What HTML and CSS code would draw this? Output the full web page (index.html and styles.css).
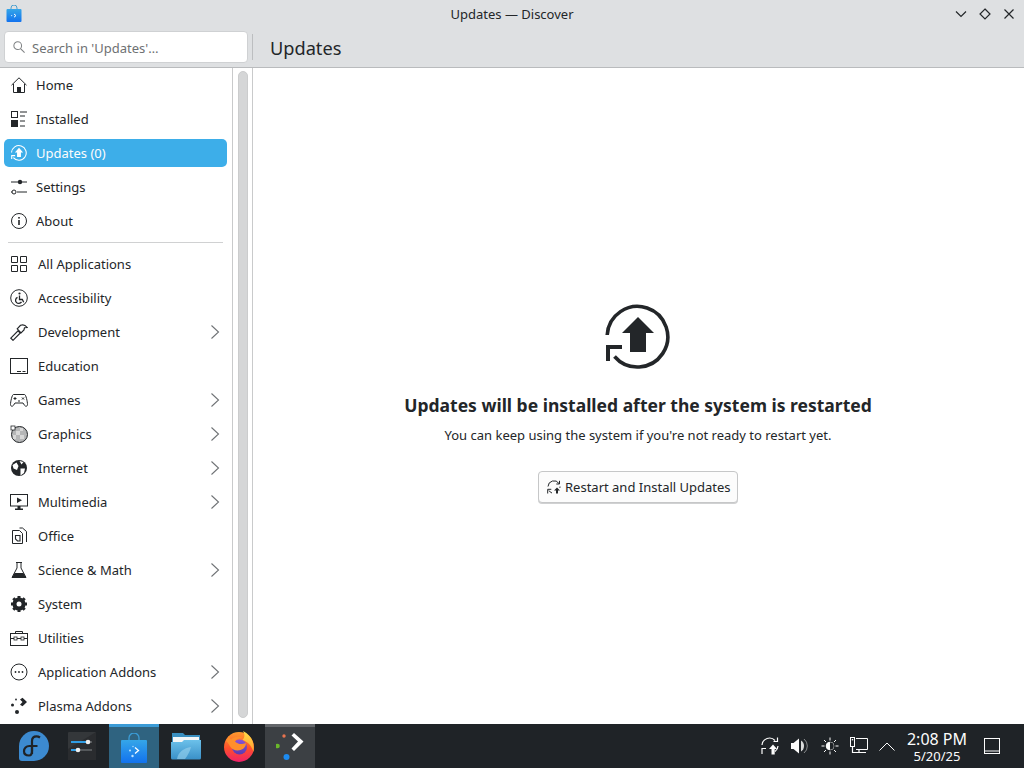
FILE: index.html
```html
<!DOCTYPE html>
<html lang="en">
<head>
<meta charset="utf-8">
<title>Updates — Discover</title>
<link rel="stylesheet" href="styles.css">
</head>
<body>
<svg class="defs" width="0" height="0" aria-hidden="true">
  <defs>
    <symbol id="chev" viewBox="0 0 12 16"><path d="M2.500 1.500 9.500 8 2.500 14.500" fill="none" stroke="#6f7275" stroke-width="1.100"/></symbol>
    <linearGradient id="bag" x1="0" y1="0" x2="0" y2="1"><stop offset="0" stop-color="#35a6e8"/><stop offset="1" stop-color="#1272ee"/></linearGradient>
    <linearGradient id="fold" x1="0" y1="0" x2="0" y2="1"><stop offset="0" stop-color="#6cc1ea"/><stop offset="1" stop-color="#3a90c8"/></linearGradient>
    <linearGradient id="ff" x1="0" y1="0" x2="0" y2="1"><stop offset="0" stop-color="#ff9a2e"/><stop offset=".55" stop-color="#ff4f2c"/><stop offset="1" stop-color="#f0206a"/></linearGradient>
    <linearGradient id="ffin" x1="0" y1="0" x2="0" y2="1"><stop offset="0" stop-color="#8a55d8"/><stop offset="1" stop-color="#5b3bb0"/></linearGradient>
    <linearGradient id="ffy" x1="0" y1="0" x2="0" y2="1"><stop offset="0" stop-color="#ffe14a"/><stop offset="1" stop-color="#ff9a2e"/></linearGradient>
  </defs>
</svg>

<div class="window">
  <header class="titlebar">
    <div class="titlebar-app">
      <svg width="16" height="18" viewBox="0 0 16 18"><path d="M5 5V3a3 3 0 0 1 6 0v2" fill="none" stroke="#4a9fd0" stroke-width="1"/><rect x="0.500" y="4" width="15" height="13" rx="1" fill="url(#bag)"/><path d="M8 9l2 1.600L8 12.200" fill="none" stroke="#fff" stroke-width="1"/><circle cx="5.600" cy="10.600" r=".7" fill="#bfe4ff"/></svg>
    </div>
    <div class="titlebar-title">Updates — Discover</div>
    <div class="titlebar-controls">
      <svg width="14" height="14" viewBox="0 0 14 14"><path d="M2 4.500 7 9.500 12 4.500" fill="none" stroke="#232629" stroke-width="1.200"/></svg>
      <svg width="14" height="14" viewBox="0 0 14 14"><path d="M7 2 12 7 7 12 2 7Z" fill="none" stroke="#232629" stroke-width="1.200"/></svg>
      <svg width="14" height="14" viewBox="0 0 14 14"><path d="M2.500 2.500 11.500 11.500M11.500 2.500 2.500 11.500" fill="none" stroke="#232629" stroke-width="1.200"/></svg>
    </div>
  </header>

  <div class="toolbar">
    <div class="search">
      <svg width="12" height="12" viewBox="0 0 14 14"><circle cx="5.500" cy="5.500" r="4.500" fill="none" stroke="#7f8284" stroke-width="1.200"/><path d="M8.800 8.800 13.500 13.500" stroke="#7f8284" stroke-width="1.300"/></svg>
      <span class="search-text">Search in 'Updates'…</span>
    </div>
    <div class="toolbar-sep"></div>
    <h1 class="page-title">Updates</h1>
  </div>

  <div class="content">
    <nav class="sidebar">
      <ul class="nav nav-top">
        <li class="nav-item">
          <svg class="ico" viewBox="0 0 16 16"><path d="M.5 8.200 8 .8l7.500 7.400" fill="none" stroke="#232629"/><path d="M2.500 7v8.500h11V7" fill="none" stroke="#232629"/><rect x="6" y="10" width="4" height="5.500" fill="#232629"/></svg>
          <span>Home</span>
        </li>
        <li class="nav-item">
          <svg class="ico" viewBox="0 0 16 16"><rect x=".5" y=".5" width="6" height="6" fill="none" stroke="#232629"/><rect x="0" y="9" width="7" height="7" fill="#232629"/><path d="M9 1h7M9 5h5M9 10h5M9 15h5" stroke="#232629" fill="none"/></svg>
          <span>Installed</span>
        </li>
        <li class="nav-item nav-active">
          <svg class="ico" viewBox="0 0 66 66"><path d="M2.200 31A30.300 30.300 0 1 1 9.500 52.500" fill="none" stroke="#fff" stroke-width="4.500"/><path d="M33 11 16 31H25V50H41V31H50Z" fill="#fff"/><path d="M3 58V44H17" fill="none" stroke="#fff" stroke-width="4.500"/></svg>
          <span>Updates (0)</span>
        </li>
        <li class="nav-item">
          <svg class="ico" viewBox="0 0 16 16"><path d="M0 3h16M6 13h10M0 13h1" stroke="#232629" fill="none"/><circle cx="9" cy="3" r="2.200" fill="#232629"/><circle cx="3" cy="13" r="2" fill="none" stroke="#232629"/></svg>
          <span>Settings</span>
        </li>
        <li class="nav-item">
          <svg class="ico" viewBox="0 0 16 16"><circle cx="8" cy="8" r="7.500" fill="none" stroke="#232629"/><rect x="7.200" y="7" width="1.600" height="5" fill="#232629"/><rect x="7.200" y="4" width="1.600" height="1.600" fill="#232629"/></svg>
          <span>About</span>
        </li>
      </ul>
      <div class="nav-sep"></div>
      <ul class="nav nav-cats">
        <li class="nav-item">
          <svg class="ico" viewBox="0 0 18 18"><path d="M1.500 1.500h6v6h-6zM10.500 1.500h6v6h-6zM1.500 10.500h6v6h-6zM10.500 10.500h6v6h-6z" fill="none" stroke="#232629"/></svg>
          <span>All Applications</span>
        </li>
        <li class="nav-item">
          <svg class="ico" viewBox="0 0 18 18"><circle cx="9" cy="9" r="8.300" fill="none" stroke="#232629"/><circle cx="9.500" cy="4.500" r="1.100" fill="#232629"/><path d="M9.500 6.500v4h2.800l1.400 2.800M7.500 8.300a3.200 3.200 0 1 0 4 4.600" fill="none" stroke="#232629" stroke-width="1.300"/></svg>
          <span>Accessibility</span>
        </li>
        <li class="nav-item has-sub">
          <svg class="ico" viewBox="0 0 18 18"><path d="M.8 15.200 8 7.800 10.300 10 3 17.300Z" fill="none" stroke="#232629" stroke-width="1.200"/><path d="M7.200 5.800 10.500 2.300c2.500-1 4.800-.3 6.700 2.200l-2.700.2-.5 2.300L11 10Z" fill="none" stroke="#232629" stroke-width="1.200"/></svg>
          <span>Development</span>
          <svg class="chev"><use href="#chev"/></svg>
        </li>
        <li class="nav-item">
          <svg class="ico" viewBox="0 0 18 18"><rect x=".5" y="1.500" width="17" height="15" fill="none" stroke="#232629"/><path d="M7 14.500h4M12.500 14.500h3" stroke="#232629"/></svg>
          <span>Education</span>
        </li>
        <li class="nav-item has-sub">
          <svg class="ico" viewBox="0 0 18 18"><path d="M3.500 3.500h11C16 3.500 17.500 11 17.500 13.500c0 2-2 2.300-3 .8L13 12H5l-1.500 2.300c-1 1.500-3 1.200-3-.8C.5 11 2 3.500 3.500 3.500Z" fill="none" stroke="#232629"/><path d="M3.500 7.500h3M5 6v3M8 10h2M12 6.500l2 2M14 6.500l-2 2" stroke="#232629" fill="none"/></svg>
          <span>Games</span>
          <svg class="chev"><use href="#chev"/></svg>
        </li>
        <li class="nav-item has-sub">
          <svg class="ico" viewBox="0 0 18 18"><circle cx="9.500" cy="9.500" r="8" fill="#b5b6b7" stroke="#232629"/><path d="M6 6h4v4H6zM10 10h4v4h-4zM3 10h3v4H3zM10 3h3v3h-3z" fill="#d8d8d8"/><rect x="1" y="1" width="4" height="4" fill="#fff" stroke="#232629" stroke-width=".8"/></svg>
          <span>Graphics</span>
          <svg class="chev"><use href="#chev"/></svg>
        </li>
        <li class="nav-item has-sub">
          <svg class="ico" viewBox="0 0 18 18"><circle cx="9" cy="9" r="8" fill="#232629"/><path d="M2.500 6 6.500 3.500 8.500 7 7 11 3.500 9.500ZM10.500 9.500h4.500l-1 4.500-3.500 2.500ZM9.500 2l4 1-2 2.500Z" fill="#fff"/></svg>
          <span>Internet</span>
          <svg class="chev"><use href="#chev"/></svg>
        </li>
        <li class="nav-item has-sub">
          <svg class="ico" viewBox="0 0 18 18"><rect x=".5" y="1.500" width="17" height="11.500" fill="none" stroke="#232629"/><path d="M7 4.500 12 7.200 7 10Z" fill="#232629"/><path d="M7.500 13h3v2.500h-3ZM5 15.500h8V17H5Z" fill="#232629"/></svg>
          <span>Multimedia</span>
          <svg class="chev"><use href="#chev"/></svg>
        </li>
        <li class="nav-item">
          <svg class="ico" viewBox="0 0 18 18"><path d="M2.500 3.500h7l3 3v10h-10ZM9.500 1h3l4 3.500V15" fill="none" stroke="#232629"/><path d="M5.500 8.500h4.500v5.500H7.500L5.500 12Z" fill="none" stroke="#232629" stroke-width="1.100"/></svg>
          <span>Office</span>
        </li>
        <li class="nav-item has-sub">
          <svg class="ico" viewBox="0 0 18 18"><path d="M6 1.500h6M7 1.500V7L2 16.500h14L11 7V1.500" fill="none" stroke="#232629"/><path d="M4.500 12h9l2.500 4.500H2Z" fill="#232629"/></svg>
          <span>Science &amp; Math</span>
          <svg class="chev"><use href="#chev"/></svg>
        </li>
        <li class="nav-item">
          <svg class="ico" viewBox="0 0 18 18"><circle cx="9" cy="9" r="4.800" fill="none" stroke="#232629" stroke-width="3.500"/><path d="M9 1v16M1 9h16M3.300 3.300 14.700 14.700M14.700 3.300 3.300 14.700" stroke="#232629" stroke-width="3"/><circle cx="9" cy="9" r="2.500" fill="#fff"/></svg>
          <span>System</span>
        </li>
        <li class="nav-item">
          <svg class="ico" viewBox="0 0 18 18"><rect x=".5" y="4.500" width="17" height="12" fill="none" stroke="#232629"/><path d="M5.500 4.500V2.500h7v2M.5 9.500h17" fill="none" stroke="#232629"/><rect x="4" y="8" width="3" height="3" fill="#fff" stroke="#232629" stroke-width=".8"/><rect x="11" y="8" width="3" height="3" fill="#fff" stroke="#232629" stroke-width=".8"/></svg>
          <span>Utilities</span>
        </li>
        <li class="nav-item has-sub">
          <svg class="ico" viewBox="0 0 18 18"><circle cx="9" cy="9" r="8" fill="none" stroke="#232629"/><circle cx="5.500" cy="9" r=".9" fill="#232629"/><circle cx="9" cy="9" r=".9" fill="#232629"/><circle cx="12.500" cy="9" r=".9" fill="#232629"/></svg>
          <span>Application Addons</span>
          <svg class="chev"><use href="#chev"/></svg>
        </li>
        <li class="nav-item has-sub">
          <svg class="ico" viewBox="0 0 18 18"><path d="M10 2.500 12.500 .8 17 5 12.500 9.300 10 7.800 12.500 5Z" fill="#232629"/><circle cx="2.500" cy="8" r="1.500" fill="#232629"/><circle cx="7" cy="15" r="2" fill="#232629"/><circle cx="6" cy="2.500" r=".9" fill="#232629"/></svg>
          <span>Plasma Addons</span>
          <svg class="chev"><use href="#chev"/></svg>
        </li>
      </ul>
    </nav>

    <div class="scroller"><div class="scroll-thumb"></div></div>

    <main class="main">
      <svg class="hero-icon" width="66" height="66" viewBox="0 0 66 66">
        <path d="M2.200 31A30.300 30.300 0 1 1 9.500 52.500" fill="none" stroke="#232629" stroke-width="3.600"/>
        <path d="M33 13 17 29H25V48H41V29H49Z" fill="#232629"/>
        <path d="M3 57V43H17" fill="none" stroke="#232629" stroke-width="4"/>
      </svg>
      <h2 class="heading">Updates will be installed after the system is restarted</h2>
      <p class="subtext">You can keep using the system if you're not ready to restart yet.</p>
      <button class="action" type="button">
        <svg width="14" height="14" viewBox="0 0 14 14"><path d="M1 6.500A6 6 0 0 1 12 3.500M13 6.500A6 6 0 0 1 12.800 8" fill="none" stroke="#232629" stroke-width="1"/><path d="M12.500 .8v3.200H9.300M.7 13.500V9.300h3.600M2 10.500A5.500 5.500 0 0 0 5 13" fill="none" stroke="#232629" stroke-width="1"/><path d="M10 7.500 7 10.500H9V13.500H11V10.500H13Z" fill="#232629"/></svg>
        <span>Restart and Install Updates</span>
      </button>
    </main>
  </div>
</div>

<footer class="taskbar">
  <div class="launchers">
    <div class="task task-fedora">
      <svg width="30" height="30" viewBox="0 0 30 30"><path d="M15 0a15 15 0 0 1 0 30H3a3 3 0 0 1-3-3V15A15 15 0 0 1 15 0Z" fill="#3c8ad0"/><path d="M10 24.500c-3.500 0-5-2-5-4.200 0-3 2.300-5.300 5.300-5.300h8.200M13 23V10c0-3 2-4.700 4.500-4.700 1.500 0 2.500.5 3.500 1.200" fill="none" stroke="#1f2327" stroke-width="2.200"/><path d="M13 15v5c0 3-1 4.500-3 4.500" fill="none" stroke="#1f2327" stroke-width="2.200"/></svg>
    </div>
    <div class="task task-settings">
      <svg width="28" height="28" viewBox="0 0 28 28"><rect width="28" height="28" rx="1" fill="#34373a"/><path d="M0 28V17L28 0v28Z" fill="#2a2c2f"/><rect x="3" y="9" width="21" height="2" fill="#55585b"/><rect x="3" y="9" width="17" height="2" fill="#2f9de4"/><circle cx="20" cy="10" r="2.300" fill="#eee"/><rect x="3" y="17" width="21" height="2" fill="#55585b"/><rect x="3" y="17" width="9" height="2" fill="#2f9de4"/><circle cx="10" cy="18" r="2.300" fill="#eee"/></svg>
    </div>
    <div class="task task-active-blue">
      <svg width="26" height="30" viewBox="0 0 26 30"><path d="M8 9V5a5 5 0 0 1 10 0v4" fill="none" stroke="#3a9cd6" stroke-width="1.300"/><rect x="0" y="7" width="26" height="23" rx="1" fill="url(#bag)"/><path d="M14 14.500l3.500 3-3.500 3" fill="none" stroke="#fff" stroke-width="1.300"/><circle cx="9" cy="17.500" r="1" fill="#bfe4ff"/><circle cx="12" cy="13.500" r=".7" fill="#bfe4ff"/><circle cx="11.500" cy="23" r="1.200" fill="#bfe4ff"/></svg>
    </div>
    <div class="task task-folder">
      <svg width="30" height="28" viewBox="0 0 30 28"><path d="M1 1h11l2 2h15v8H1Z" fill="#3a8fc0"/><rect x="2" y="5" width="26" height="7" fill="#f4f6f7"/><path d="M0 10h11l2-2h17v18a1.500 1.500 0 0 1-1.500 1.500H1.500A1.500 1.500 0 0 1 0 26Z" fill="url(#fold)"/><path d="M6 27c1-7 7-11 14-12-1 4-3 8-6 12Z" fill="#9bd4ef" opacity=".6"/></svg>
    </div>
    <div class="task">
      <svg width="30" height="31" viewBox="0 0 30 31"><circle cx="15" cy="16" r="15" fill="url(#ff)"/><path d="M19 0c5 2.500 8 6 9.500 10 1.500 4 1.500 8 1 11-2-6-5-10-11-12 2.500-2.500 2.500-6 .5-9Z" fill="url(#ffy)"/><circle cx="15.500" cy="16" r="7.500" fill="url(#ffin)"/><path d="M2 10c1-3 2.500-4.500 3.500-5.500 0 2 .5 3 1.500 4 3-3 8-3.500 12-1.500-3.500 0-7 1-8 3.500 2 2.500 7 3.500 11 1.500 0 3-2 6-5.500 7-4 1-8 0-10-3-1.500-2-2-4-4.500-6Z" fill="#ff8f2c"/></svg>
    </div>
    <div class="task task-active-grey">
      <svg width="28" height="30" viewBox="0 0 28 30"><circle cx="8" cy="3" r="1.700" fill="#e8734f"/><circle cx="1.500" cy="13" r="2.300" fill="#6ab82a"/><circle cx="10.500" cy="24" r="3" fill="#1d8bf0"/><path d="M15.500 2.500 18 0l9.500 8.500L18 18l-2.500-2.500L22 8.500Z" fill="#fff"/></svg>
    </div>
  </div>
  <div class="tray">
    <svg class="tray-ico" width="18" height="18" viewBox="0 0 18 18"><path d="M1 8A7.500 7.500 0 0 1 14 3.500M17 9a7.500 7.500 0 0 1-3 5.500" fill="none" stroke="#fcfcfc" stroke-width="1.200"/><path d="M16.500 .5v4h-4M1 17v-5.500h4" fill="none" stroke="#fcfcfc" stroke-width="1.200"/><path d="M12 7.500 8 12h2.500v5.500h3.200V12H16Z" fill="#fcfcfc"/></svg>
    <svg class="tray-ico tray-ico-wide" width="18" height="18" viewBox="0 0 18 18"><path d="M1 6h2.500L9 1.500v15L3.500 12H1Z" fill="#fcfcfc"/><path d="M11 3.500a6.500 6.500 0 0 1 0 11" fill="#fcfcfc" opacity=".85"/><path d="M14 2a9 9 0 0 1 0 14" fill="none" stroke="#8a8c8e" stroke-width="1"/></svg>
    <svg class="tray-ico" width="18" height="18" viewBox="0 0 18 18"><circle cx="9" cy="9" r="3.800" fill="#fcfcfc" stroke="#fcfcfc"/><path d="M9 5.200a3.800 3.800 0 0 1 0 7.600Z" fill="#1f2327"/><path d="M9 .5v3M9 14.500v3M.5 9h3M14.500 9h3M3 3l2 2M13 13l2 2M15 3l-2 2M5 13l-2 2" stroke="#fcfcfc" fill="none"/></svg>
    <svg class="tray-ico tray-ico-narrow" width="18" height="18" viewBox="0 0 18 18"><path d="M6 1.500h11.500v11H6" fill="none" stroke="#fcfcfc"/><rect x=".5" y=".5" width="4" height="9" fill="#1f2327" stroke="#fcfcfc"/><rect x="1.800" y="2" width="1.400" height="1.400" fill="#fcfcfc"/><path d="M2.500 10v5.500H16M7 15.500h6M9 13v3" fill="none" stroke="#fcfcfc" stroke-width="1.200"/></svg>
    <svg class="tray-arrow" width="16" height="9" viewBox="0 0 16 9"><path d="M.5 8.500 8 1l7.500 7.500" fill="none" stroke="#fcfcfc" stroke-width="1"/></svg>
    <div class="clock">
      <div class="clock-time">2:08 PM</div>
      <div class="clock-date">5/20/25</div>
    </div>
    <svg class="show-desktop" width="16" height="16" viewBox="0 0 16 16"><rect x=".5" y=".5" width="15" height="15" fill="none" stroke="#fcfcfc"/><path d="M.5 13h15" stroke="#fcfcfc"/></svg>
  </div>
</footer>
</body>
</html>
```
FILE: styles.css
```css
* { box-sizing: border-box; }
html, body { margin: 0; padding: 0; }
body {
  width: 1024px;
  height: 768px;
  overflow: hidden;
  font-family: "Noto Sans", sans-serif;
  font-size: 13px;
  color: #232629;
  background: #fff;
  display: flex;
  flex-direction: column;
}
.defs { display: block; width: 0; height: 0; }
.window { flex: 1; display: flex; flex-direction: column; min-height: 0; }

.titlebar {
  height: 30px;
  background: #dee0e2;
  display: grid;
  grid-template-columns: 1fr auto 1fr;
  align-items: center;
  padding: 0 6px 2px 6px;
}
.titlebar-app { display: flex; align-items: center; }
.titlebar-title { line-height: 28px; }
.titlebar-controls { display: flex; justify-content: flex-end; gap: 10px; padding-right: 2px; }

.toolbar {
  height: 38px;
  background: #dee0e2;
  border-bottom: 1px solid #b9bbbd;
  display: flex;
  align-items: center;
  padding: 0 0 3px 4px;
}
.search {
  width: 244px;
  height: 32px;
  background: #fff;
  border: 1px solid #cfd1d3;
  border-radius: 4px;
  display: flex;
  align-items: center;
  gap: 7px;
  padding: 0 8px;
}
.search-text { color: #6e7173; padding-top: 1px; }
.toolbar-sep { width: 1px; height: 26px; background: #bcbec0; margin-left: 4px; }
.page-title { margin: 2px 0 0 17px; font-size: 18.2px; font-weight: 400; line-height: 26px; }

.content { flex: 1; display: flex; min-height: 0; }
.sidebar { width: 232px; flex: none; background: #fff; }
.nav { list-style: none; margin: 0; padding: 0; }
.nav-item {
  height: 34px;
  display: flex;
  align-items: center;
  position: relative;
}
.nav-top .nav-item { padding-left: 11px; gap: 9px; }
.nav-top .ico { width: 16px; height: 16px; }
.nav-cats .nav-item { padding-left: 10px; gap: 10px; }
.nav-cats .ico { width: 18px; height: 18px; }
.ico { flex: none; }
.nav-active { color: #fcfcfc; z-index: 0; }
.nav-active::before {
  content: "";
  position: absolute;
  left: 4px;
  right: 5px;
  top: 3px;
  bottom: 3px;
  background: #3daee9;
  border-radius: 5px;
  z-index: -1;
}
.nav-sep { height: 1px; background: #d0d1d2; margin: 4px 9px 4px 8px; }
.chev { width: 12px; height: 16px; margin-left: auto; margin-right: 11px; flex: none; }

.scroller {
  width: 21px;
  flex: none;
  background: #fff;
  border-left: 1px solid #c9cacb;
  border-right: 1px solid #c9cacb;
  padding: 3px 4px 6px 5px;
}
.scroll-thumb {
  height: 100%;
  background: #d5d6d7;
  border: 1px solid #cbcccd;
  border-radius: 5px;
}

.main {
  flex: 1;
  background: #fff;
  display: flex;
  flex-direction: column;
  align-items: center;
  padding: 236px 1px 0 0;
}
.hero-icon { display: block; flex: none; }
.heading { margin: 23px 0 0; font-size: 17.5px; font-weight: 700; line-height: 24px; }
.subtext { margin: 9px 0 0; line-height: 18px; }
.action {
  margin-top: 27px;
  height: 32px;
  width: 200px;
  padding: 0 0 0 8px;
  font: inherit;
  color: #232629;
  background: #fcfcfc;
  border: 1px solid #c6c7c8;
  border-radius: 4px;
  box-shadow: 0 1px 0 #d0d1d2;
  display: flex;
  align-items: center;
  gap: 4px;
}

.taskbar {
  height: 44px;
  flex: none;
  background: #1f2327;
  display: flex;
  justify-content: space-between;
  color: #fcfcfc;
}
.launchers { display: flex; padding-left: 9px; }
.task {
  width: 52px;
  display: flex;
  align-items: center;
  justify-content: center;
}
.task-fedora { width: 50px; }
.task-settings { width: 50px; padding-right: 4px; }
.task-folder { width: 54px; }
.task-active-blue {
  width: 50px;
  background: #2f6380;
  border-top: 3px solid #3b9bd6;
}
.task-active-grey {
  width: 50px;
  background: #3c4044;
  border-top: 3px solid #63666a;
}
.tray { display: flex; align-items: center; padding-right: 24px; }
.tray-ico { margin-right: 11px; flex: none; }
.tray-ico-wide { margin-right: 13px; }
.tray-ico-narrow { margin-right: 9px; }
.tray-arrow { margin: 0 0 0 2px; flex: none; }
.clock { width: 80px; margin-left: 2px; text-align: center; }
.clock-time { font-size: 16px; line-height: 20px; }
.clock-date { font-size: 13px; line-height: 14px; }
.show-desktop { margin-left: 7px; flex: none; }
```
